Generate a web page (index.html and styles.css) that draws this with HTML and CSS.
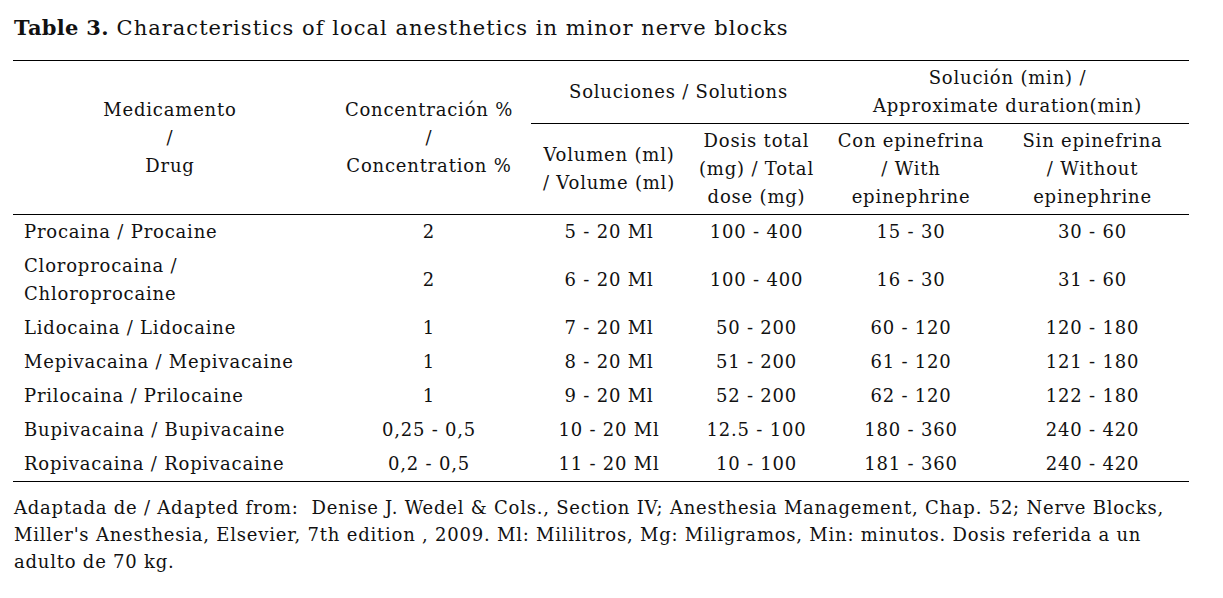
FILE: index.html
```html
<!DOCTYPE html>
<html lang="es">
<head>
<meta charset="utf-8">
<title>Table 3</title>
<link rel="stylesheet" href="styles.css">
</head>
<body>
<div class="page">
  <p class="caption"><b class="label">Table 3.</b> Characteristics of local anesthetics in minor nerve blocks</p>
  <table class="data">
    <colgroup>
      <col class="c1"><col class="c2"><col class="c3"><col class="c4"><col class="c5"><col class="c6">
    </colgroup>
    <thead>
      <tr class="group">
        <th rowspan="2">Medicamento<br>/<br>Drug</th>
        <th rowspan="2">Concentración %<br>/<br>Concentration %</th>
        <th colspan="2" class="grp">Soluciones / Solutions</th>
        <th colspan="2" class="grp">Solución (min) /<br>Approximate duration(min)</th>
      </tr>
      <tr class="sub">
        <th>Volumen (ml)<br>/ Volume (ml)</th>
        <th>Dosis total<br>(mg) / Total<br>dose (mg)</th>
        <th>Con epinefrina<br>/ With<br>epinephrine</th>
        <th>Sin epinefrina<br>/ Without<br>epinephrine</th>
      </tr>
    </thead>
    <tbody>
      <tr><td class="name">Procaina / Procaine</td><td>2</td><td>5 - 20 Ml</td><td>100 - 400</td><td>15 - 30</td><td>30 - 60</td></tr>
      <tr><td class="name">Cloroprocaina /<br>Chloroprocaine</td><td>2</td><td>6 - 20 Ml</td><td>100 - 400</td><td>16 - 30</td><td>31 - 60</td></tr>
      <tr><td class="name">Lidocaina / Lidocaine</td><td>1</td><td>7 - 20 Ml</td><td>50 - 200</td><td>60 - 120</td><td>120 - 180</td></tr>
      <tr><td class="name">Mepivacaina / Mepivacaine</td><td>1</td><td>8 - 20 Ml</td><td>51 - 200</td><td>61 - 120</td><td>121 - 180</td></tr>
      <tr><td class="name">Prilocaina / Prilocaine</td><td>1</td><td>9 - 20 Ml</td><td>52 - 200</td><td>62 - 120</td><td>122 - 180</td></tr>
      <tr><td class="name">Bupivacaina / Bupivacaine</td><td>0,25 - 0,5</td><td>10 - 20 Ml</td><td>12.5 - 100</td><td>180 - 360</td><td>240 - 420</td></tr>
      <tr><td class="name">Ropivacaina / Ropivacaine</td><td>0,2 - 0,5</td><td>11 - 20 Ml</td><td>10 - 100</td><td>181 - 360</td><td>240 - 420</td></tr>
    </tbody>
  </table>
  <p class="note">Adaptada de / Adapted from:&nbsp; Denise J. Wedel &amp; Cols., Section IV; Anesthesia Management, Chap. 52; Nerve Blocks, Miller's Anesthesia, Elsevier, 7th edition , 2009. Ml: Mililitros, Mg: Miligramos, Min: minutos. Dosis referida a un adulto de 70 kg.</p>
</div>
</body>
</html>
```

FILE: styles.css
```css
html, body {
  margin: 0;
  padding: 0;
  background: #ffffff;
}
body {
  font-family: "DejaVu Serif", "Liberation Serif", serif;
  color: #111111;
}
.page {
  padding: 0 0 0 13px;
  width: 1176px;
}
.caption {
  margin: 0;
  padding-top: 15px;
  height: 60px;
  box-sizing: border-box;
  font-size: 21px;
  line-height: 26px;
  letter-spacing: 1.02px;
  padding-left: 1px;
}
.label {
  font-weight: bold;
  letter-spacing: 0.3px;
}
.data {
  border-collapse: collapse;
  width: 1176px;
  table-layout: fixed;
  font-size: 18px;
  line-height: 28px;
  letter-spacing: 0.8px;
  border-top: 1px solid #000;
  border-bottom: 1px solid #000;
}
.c1 { width: 314px; }
.c2 { width: 204px; }
.c3 { width: 156px; }
.c4 { width: 139px; }
.c5 { width: 170px; }
.c6 { width: 193px; }
.data th {
  font-weight: normal;
  padding: 3px 0;
  text-align: center;
  vertical-align: middle;
  white-space: nowrap;
}
.data thead tr.sub th {
  border-top: 1px solid #000;
}
.data thead {
  border-bottom: 1px solid #000;
}
.data td {
  padding: 3px 0;
  text-align: center;
  vertical-align: middle;
  white-space: nowrap;
}
.data td.name {
  text-align: left;
  padding-left: 11px;
}
.note {
  margin: 12px 0 0 1px;
  font-size: 18px;
  line-height: 27px;
  letter-spacing: 0.78px;
  width: 1165px;
}
```
